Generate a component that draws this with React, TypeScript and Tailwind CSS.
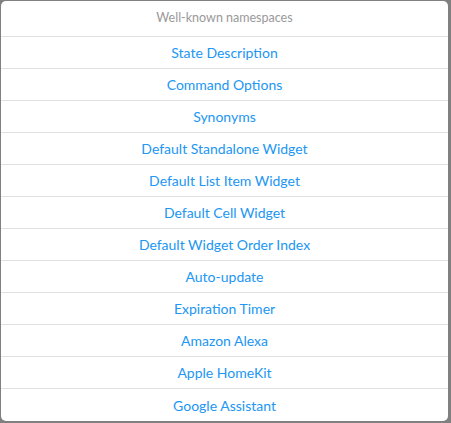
const items = [
  'State Description',
  'Command Options',
  'Synonyms',
  'Default Standalone Widget',
  'Default List Item Widget',
  'Default Cell Widget',
  'Default Widget Order Index',
  'Auto-update',
  'Expiration Timer',
  'Amazon Alexa',
  'Apple HomeKit',
  'Google Assistant',
];

export default function App() {
  return (
    <div className="w-[451px] h-[423px] bg-[#808080] pl-[1px] pt-[1px]" style={{ fontFamily: '"Segoe UI", Lato, "Liberation Sans", sans-serif' }}>
      <div className="w-[447px] bg-white rounded-[5px] overflow-hidden flex flex-col">
        <div className="h-[36px] flex items-center justify-center text-[12.5px] text-[#999999] border-b border-[#e0e0e0]">
          Well-known namespaces
        </div>
        {items.map((label, i) => (
          <div
            key={label}
            className={`h-[32px] flex items-center justify-center text-[14px] text-[#2196f3] ${i < items.length - 1 ? 'border-b border-[#e0e0e0]' : ''}`}
          >
            {label}
          </div>
        ))}
      </div>
    </div>
  );
}
